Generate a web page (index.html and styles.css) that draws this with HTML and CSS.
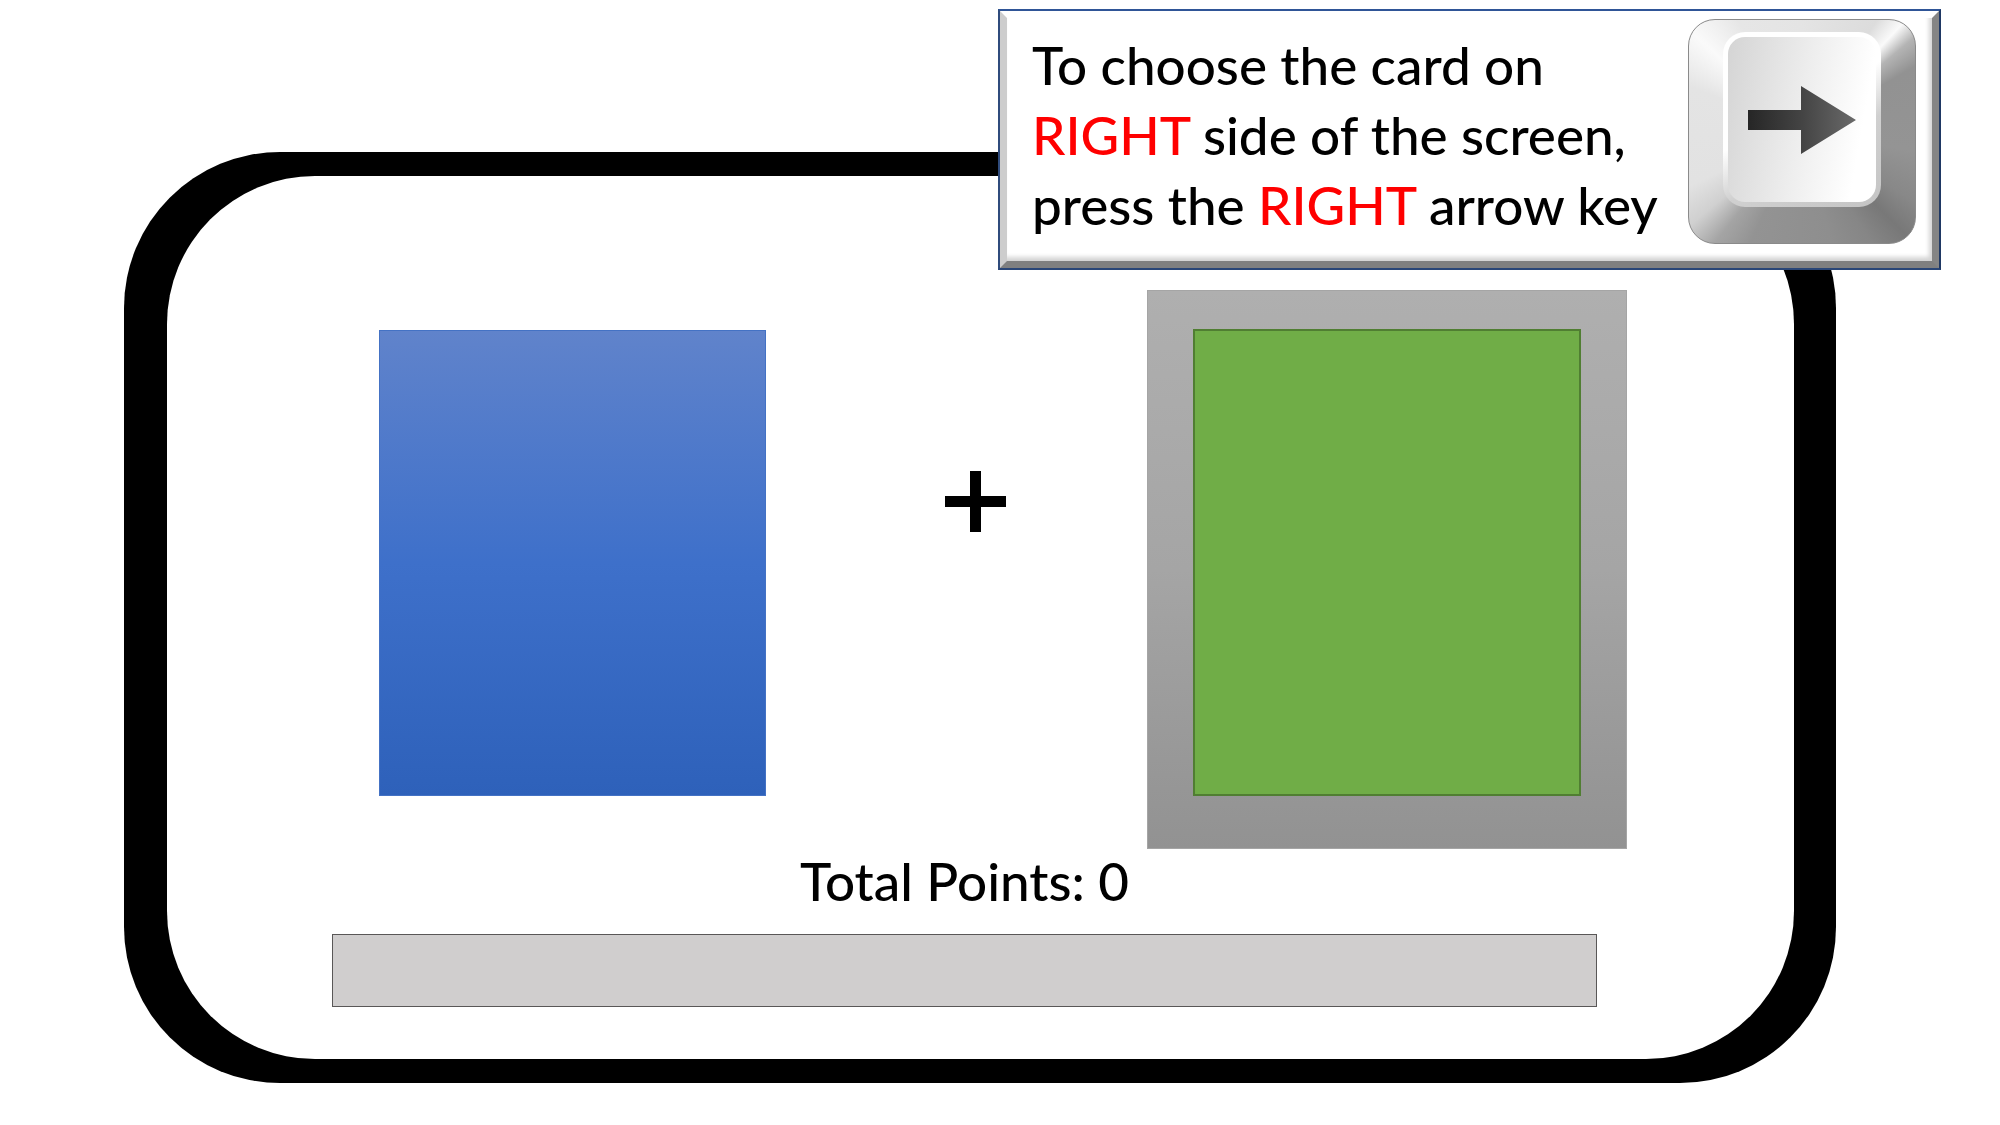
FILE: index.html
```html
<!DOCTYPE html>
<html lang="en">
<head>
<meta charset="utf-8">
<meta name="viewport" content="width=device-width, initial-scale=1">
<title>Total Points</title>
<link rel="stylesheet" href="styles.css">
</head>
<body>
<main class="frame">
  <div class="screen">
    <div class="choices">
      <button class="card card-blue" type="button" aria-label="Blue card"></button>
      <div class="fixation">
        <svg class="plus" viewBox="0 0 61 61" aria-hidden="true"><path d="M25 0h11v25h25v11H36v25H25V36H0V25h25z"/></svg>
      </div>
      <div class="selection">
        <button class="card card-green" type="button" aria-label="Green card"></button>
      </div>
    </div>
    <div class="score">
      <p class="score-text">Total Points: 0</p>
      <div class="score-bar"></div>
    </div>
  </div>
</main>
<aside class="callout">
  <div class="bevel">
    <p class="callout-text">To choose the card on<br><span class="accent">RIGHT</span> side of the screen,<br>press the <span class="accent">RIGHT</span> arrow key</p>
    <button class="key" type="button" aria-label="Right arrow">
      <span class="key-cap">
        <svg class="arrow" viewBox="0 0 108 68" aria-hidden="true">
          <defs>
            <linearGradient id="ink" x1="0" y1="0" x2="1" y2="0">
              <stop offset="0" stop-color="#262626"/>
              <stop offset="0.5" stop-color="#444"/>
              <stop offset="1" stop-color="#6a6a6a"/>
            </linearGradient>
          </defs>
          <path fill="url(#ink)" d="M0 24h53V0l55 34-55 34V44H0z"/>
        </svg>
      </span>
    </button>
  </div>
</aside>
</body>
</html>
```
FILE: styles.css
```css
* {
  box-sizing: border-box;
}

body {
  margin: 0;
  padding: 152px 164px 42px 124px;
  background: #fff;
  color: #000;
  font-family: Lato, "Liberation Sans", sans-serif;
  font-size: 53px;
  font-weight: 500;
  line-height: 70px;
}

p {
  margin: 0;
}

button {
  display: block;
  padding: 0;
  border: 0;
}

.frame {
  padding: 24px 42px 24px 43px;
  border-radius: 156px;
  background: #000;
}

.screen {
  padding: 114px 167px 52px 165px;
  border-radius: 148px;
  background: #fff;
}

.choices {
  display: grid;
  grid-template-columns: 387fr 381fr 480fr;
  align-items: start;
  padding-left: 47px;
}

.card {
  width: 100%;
}

.card-blue {
  height: 466px;
  margin-top: 40px;
  border: 1px solid #4472c4;
  background: linear-gradient(#6083cb, #3e70ca 50%, #2e61ba);
}

.fixation {
  display: flex;
  justify-content: center;
  padding: 181px 0 0 38px;
}

.plus {
  width: 61px;
  height: 61px;
}

.selection {
  height: 559px;
  padding: 38px 45px;
  border: 1px solid #a5a5a5;
  background: linear-gradient(#afafaf, #a5a5a5 50%, #929292);
}

.card-green {
  height: 467px;
  border: 2px solid #507e32;
  background: #70ad47;
}

.score {
  margin-right: 30px;
}

.score-text {
  padding-bottom: 21px;
  line-height: 64px;
  text-align: center;
}

.score-bar {
  height: 73px;
  border: 1px solid #595757;
  background: #d0cece;
}

.callout {
  position: absolute;
  top: 9px;
  right: 59px;
  width: 943px;
  border: 2px solid;
  border-color: #2f5597 #1f3864 #2a4677 #2f4b7c;
}

.bevel {
  display: flex;
  justify-content: space-between;
  align-items: flex-start;
  height: 257px;
  padding: 1px 16px 0 25px;
  border: 7px solid;
  border-color: #fff #858585 #808080 #cdcdcd;
  background: #fff;
  box-shadow: inset -3px -4px 4px #d4d4d4;
}

.callout-text {
  padding-top: 11px;
  white-space: nowrap;
}

.accent {
  color: #f00;
}

.key {
  width: 228px;
  height: 225px;
  padding: 12px 34px 38px 34px;
  border: 1px solid #8a8a8a;
  border-radius: 27px;
  background: conic-gradient(#e4e4e4, #dcdcdc 34deg, #fafafa 43deg, #b4b4b4 50deg, #929292 60deg, #949494 100deg, #888 122deg, #787878 135deg, #868686 148deg, #8e8e8e 165deg, #939393 205deg, #a4a4a4 218deg, #d0d0d0 230deg, #e2e2e2 244deg, #e4e4e4 292deg, #fafafa 312deg, #e6e6e6 330deg, #e4e4e4);
}

.key-cap {
  display: flex;
  align-items: center;
  justify-content: center;
  height: 175px;
  border: 5px solid transparent;
  border-radius: 22px;
  background:
    linear-gradient(100deg, #d4d4d4, #eee 50%, #fff 85%) padding-box,
    linear-gradient(150deg, #fff 45%, #d0d0d0 65%, #c4c4c4) border-box;
}

.arrow {
  width: 108px;
  height: 68px;
}
```
